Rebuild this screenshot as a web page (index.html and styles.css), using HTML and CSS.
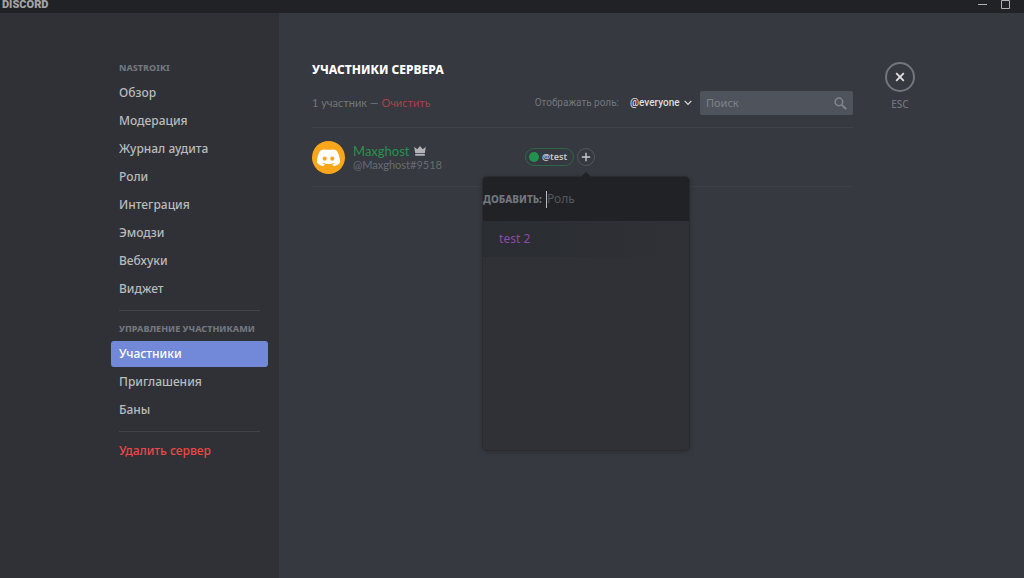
FILE: index.html
```html
<!DOCTYPE html>
<html lang="ru">
<head>
<meta charset="utf-8">
<title>Участники сервера</title>
<link rel="stylesheet" href="styles.css">
</head>
<body>
<header class="titlebar">
  <span class="wordmark">DISCORD</span>
  <div class="window-controls">
    <button class="window-button" aria-label="Свернуть"><svg width="9" height="9" viewBox="0 0 9 9"><path d="M0 4.5h9" stroke="currentColor"/></svg></button>
    <button class="window-button" aria-label="Развернуть"><svg width="9" height="9" viewBox="0 0 9 9"><path d="M.5.5h8v8h-8z" fill="none" stroke="currentColor"/></svg></button>
  </div>
</header>
<div class="layout">
  <nav class="sidebar">
    <h2 class="nav-title">NASTROIKI</h2>
    <a class="nav-item" href="#">Обзор</a>
    <a class="nav-item" href="#">Модерация</a>
    <a class="nav-item" href="#">Журнал аудита</a>
    <a class="nav-item" href="#">Роли</a>
    <a class="nav-item" href="#">Интеграция</a>
    <a class="nav-item" href="#">Эмодзи</a>
    <a class="nav-item" href="#">Вебхуки</a>
    <a class="nav-item" href="#">Виджет</a>
    <hr class="nav-separator">
    <h2 class="nav-title">УПРАВЛЕНИЕ УЧАСТНИКАМИ</h2>
    <a class="nav-item nav-item-active" href="#" aria-current="page">Участники</a>
    <a class="nav-item" href="#">Приглашения</a>
    <a class="nav-item" href="#">Баны</a>
    <hr class="nav-separator">
    <a class="nav-item nav-item-danger" href="#">Удалить сервер</a>
  </nav>
  <main class="content">
    <section class="members">
      <h1 class="page-title">УЧАСТНИКИ СЕРВЕРА</h1>
      <div class="toolbar">
        <p class="count">1 участник — <a class="clear" href="#">Очистить</a></p>
        <label class="filter-label" for="role-filter">Отображать роль:</label>
        <div class="filter">
          <select class="filter-select" id="role-filter"><option>@everyone</option></select>
          <svg class="chevron" width="8" height="6" viewBox="0 0 8 6"><path d="M.7.9 4 4.4 7.3.9" fill="none" stroke="currentColor" stroke-width="1.2"/></svg>
        </div>
        <div class="search">
          <input class="search-input" type="text" placeholder="Поиск" aria-label="Поиск">
          <svg width="13" height="13" viewBox="0 0 13 13" fill="none" stroke="currentColor"><circle cx="4.9" cy="4.9" r="3.8" stroke-width="1.5"/><path d="m7.8 7.8 4.4 4.4" stroke-width="1.9"/></svg>
        </div>
      </div>
      <div class="member">
        <svg class="avatar" width="33" height="33" viewBox="0 0 33 33">
          <circle cx="16.5" cy="16.5" r="16.5" fill="#faa61a"/>
          <path fill="#fff" d="M13.6 9 13.2 8.2C11.3 8.4 9.6 8.9 8 9.9 6 13.4 4.900 17.300 4.900 21.600 6.500 23.800 8.900 25 11.500 25L12.700 23.400C11.700 23.100 10.800 22.600 10.100 22L10.500 21.700C14.300 23.400 18.700 23.400 22.500 21.700L22.900 22C22.200 22.600 21.300 23.100 20.300 23.400L21.500 25C24.100 25 26.500 23.800 28.100 21.600 28.100 17.300 27 13.400 25 9.900 23.400 8.900 21.700 8.400 19.800 8.200L19.400 9C17.500 8.700 15.500 8.700 13.600 9Z"/>
          <ellipse cx="12.700" cy="17.600" rx="2" ry="2.200" fill="#faa61a"/><ellipse cx="20.300" cy="17.600" rx="2" ry="2.200" fill="#faa61a"/>
        </svg>
        <div class="identity">
          <div class="name-row"><span class="name">Maxghost</span>
            <svg width="12" height="10" viewBox="0 0 12 10" fill="#b1b3b6"><path d="M.2.800 3.200 3.200 6 0 8.800 3.200 11.800.8 10.800 7.200H1.200zM1.200 8h9.600v1.800H1.200z"/></svg>
          </div>
          <div class="tag">@Maxghost#9518</div>
        </div>
        <div class="roles">
          <span class="role"><span class="role-dot"></span>@test</span>
          <div class="add-role">
            <button class="add-button" aria-label="Добавить роль"><svg width="10" height="10" viewBox="0 0 10 10"><path d="M5 .8v8.400M.8 5h8.400" stroke="currentColor" stroke-width="1.400"/></svg></button>
            <div class="popover">
              <div class="popover-head">
                <label class="popover-label" for="role-search">ДОБАВИТЬ:</label>
                <span class="caret"></span>
                <input class="popover-input" id="role-search" type="text" placeholder="Роль">
              </div>
              <button class="role-option">test 2</button>
            </div>
          </div>
        </div>
      </div>
    </section>
    <div class="close">
      <button class="close-button" aria-label="Закрыть"><svg width="10" height="10" viewBox="0 0 10 10"><path d="m1.200 1.200 7.600 7.600m0-7.600L1.200 8.800" stroke="currentColor" stroke-width="1.700"/></svg></button>
      <span class="close-hint">ESC</span>
    </div>
  </main>
</div>
</body>
</html>
```
FILE: styles.css
```css
* { box-sizing: border-box; }

body {
  margin: 0;
  min-height: 100vh;
  display: flex;
  flex-direction: column;
  background: #36393f;
  color: #b9bbbe;
  font: 12px/16px "Noto Sans", "Open Sans", sans-serif;
}

h1, h2, p { margin: 0; }
a { color: inherit; text-decoration: none; }
svg { display: block; flex: none; }
button, input, select {
  margin: 0;
  padding: 0;
  border: 0;
  background: none;
  color: inherit;
  font: inherit;
  outline: 0;
}

.titlebar {
  height: 13px;
  display: flex;
  justify-content: space-between;
  background: #202225;
  padding: 0 14px 0 2px;
}
.wordmark {
  font: 900 11px/10px Roboto, sans-serif;
  color: #a2a4a7;
}
.window-controls { display: flex; gap: 14px; }
.window-button { height: 9px; color: #b0b1b3; }

.layout { flex: 1; display: flex; }

.sidebar {
  flex: 0 0 279px;
  padding: 47px 11px 24px 111px;
  background: #2f3136;
}
.nav-title {
  padding: 0 8px;
  margin-bottom: 4px;
  font-size: 9px;
  line-height: 16px;
  font-weight: 800;
  color: #72767d;
  white-space: nowrap;
}
.nav-item {
  display: block;
  height: 26px;
  margin-bottom: 2px;
  padding: 0 8px;
  border-radius: 3px;
  line-height: 26px;
  font-weight: 500;
}
.nav-item-active { background: #7289da; color: #fff; }
.nav-item-danger { color: #f04747; }
.nav-separator {
  height: 1px;
  margin: 8px 8px 10px;
  border: 0;
  background: #40434a;
}
.nav-separator:last-of-type { margin-bottom: 6px; }

.content { flex: 1; display: flex; gap: 32px; padding: 48px 32px 0 33px; }
.members { flex: 1; max-width: 541px; }
.page-title {
  font-size: 12px;
  line-height: 18px;
  font-weight: 800;
  color: #fff;
}
.toolbar {
  display: flex;
  align-items: center;
  padding: 12px 0;
  border-bottom: 1px solid #3f4249;
  font-size: 11px;
  color: #72767d;
}
.count { flex: 1; font-family: Lato, "Noto Sans", sans-serif; }
.clear { color: #a8434a; }
.filter-label {
  margin-right: 11px;
  font-family: Roboto, "Noto Sans", sans-serif;
  font-size: 10px;
}
.filter {
  display: flex;
  align-items: center;
  gap: 4px;
  margin-right: 8px;
  color: #dcddde;
  font-family: Roboto, "Noto Sans", sans-serif;
  font-size: 10px;
  font-weight: 500;
}
.filter-select { appearance: none; }
.search {
  width: 153px;
  height: 24px;
  display: flex;
  align-items: center;
  padding: 0 6px;
  border-radius: 2px;
  background: #4f545c;
  color: #82868d;
}
.search-input { flex: 1; min-width: 0; }
.search-input::placeholder { color: #7e8289; opacity: 1; }

.member {
  display: flex;
  align-items: center;
  height: 59px;
  border-bottom: 1px solid #3c3f45;
}
.identity { flex: 1; margin-left: 8px; font-family: Lato, sans-serif; }
.name-row { display: flex; align-items: center; gap: 4px; line-height: 14px; }
.name { font-size: 13px; color: #27924f; }
.tag { font-size: 11px; line-height: 13px; color: #686c73; }
.roles { flex: 0 0 328px; display: flex; gap: 3px; }
.role {
  display: flex;
  align-items: center;
  gap: 3px;
  height: 18px;
  padding: 0 6px 0 3px;
  border: 1px solid #2b6748;
  border-radius: 9px;
  font-size: 9px;
  font-weight: 600;
  color: #c7c9cb;
}
.role-dot { width: 10px; height: 10px; border-radius: 5px; background: #23914f; }
.add-role { position: relative; }
.add-button {
  width: 18px;
  height: 18px;
  display: grid;
  place-items: center;
  border: 1px solid #53565d;
  border-radius: 9px;
  color: #c7c9cb;
}

.popover {
  position: absolute;
  top: 28px;
  left: 50%;
  width: 208px;
  height: 275px;
  transform: translateX(-50%);
  border: 1px solid #292b2f;
  border-radius: 5px;
  background: #2f3136;
  box-shadow: 0 1px 5px rgba(0, 0, 0, .2);
}
.popover::before {
  content: "";
  position: absolute;
  bottom: 100%;
  left: 50%;
  margin-left: -5px;
  border: 5px solid transparent;
  border-top: 0;
  border-bottom-color: #202225;
}
.popover-head {
  height: 44px;
  display: flex;
  align-items: center;
  background: #202225;
  border-radius: 4px 4px 0 0;
}
.popover-label { font-size: 10px; font-weight: 800; color: #72767d; }
.caret { width: 1px; height: 17px; margin-left: 4px; background: #b9bbbe; }
.popover-input { flex: 1; min-width: 0; }
.popover-input::placeholder { color: #55585e; opacity: 1; }
.role-option {
  display: block;
  width: 100%;
  height: 36px;
  padding: 0 16px;
  background: linear-gradient(90deg, #2a2d31, #2f3136);
  color: #8d4ba6;
  text-align: left;
}

.close { display: flex; flex-direction: column; align-items: center; gap: 4px; margin-top: 1px; }
.close-button {
  width: 30px;
  height: 30px;
  display: grid;
  place-items: center;
  border: 2px solid #72767d;
  border-radius: 50%;
  color: #e4e5e6;
}
.close-hint { font-size: 10px; color: #72767d; font-weight: 500; }
```
